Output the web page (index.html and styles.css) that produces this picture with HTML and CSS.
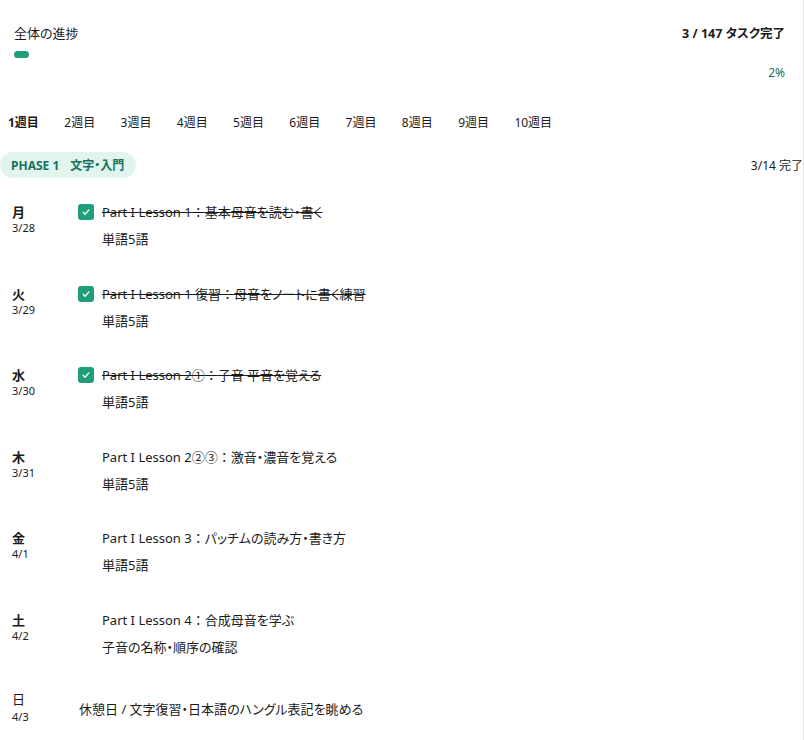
FILE: index.html
```html
<!DOCTYPE html>
<html lang="ja">
<head>
<meta charset="utf-8">
<link rel="stylesheet" href="styles.css">
</head>
<body>
<div class="page">
  <section class="progress">
    <div class="progress-top">
      <div class="progress-title">全体の進捗</div>
      <div class="progress-count">3 / 147 タスク完了</div>
    </div>
    <div class="track"><div class="fill" style="width:2%"></div></div>
    <div class="percent">2%</div>
  </section>

  <nav class="weeks">
    <span class="week active">1週目</span>
    <span class="week">2週目</span>
    <span class="week">3週目</span>
    <span class="week">4週目</span>
    <span class="week">5週目</span>
    <span class="week">6週目</span>
    <span class="week">7週目</span>
    <span class="week">8週目</span>
    <span class="week">9週目</span>
    <span class="week">10週目</span>
  </nav>

  <div class="phase-head">
    <span class="phase-badge">PHASE 1<span class="phase-name">文字・入門</span></span>
    <span class="phase-count">3/14 完了</span>
  </div>

  <div class="days">
    <div class="row">
      <div class="day"><div class="dow">月</div><div class="date">3/28</div></div>
      <div class="tasks">
        <div class="task done"><span class="check"><svg viewBox="0 0 16 16" width="16" height="16"><path d="M5.2 8.3 L7.1 10.2 L10.9 5.9" fill="none" stroke="#fff" stroke-width="1.3" stroke-linecap="round" stroke-linejoin="round"/></svg></span><span class="title">Part I Lesson 1<span class="fw">：</span>基本母音を読む・書く</span></div>
        <div class="sub">単語5語</div>
      </div>
    </div>
    <div class="row">
      <div class="day"><div class="dow">火</div><div class="date">3/29</div></div>
      <div class="tasks">
        <div class="task done"><span class="check"><svg viewBox="0 0 16 16" width="16" height="16"><path d="M5.2 8.3 L7.1 10.2 L10.9 5.9" fill="none" stroke="#fff" stroke-width="1.3" stroke-linecap="round" stroke-linejoin="round"/></svg></span><span class="title">Part I Lesson 1 復習<span class="fw">：</span>母音をノートに書く練習</span></div>
        <div class="sub">単語5語</div>
      </div>
    </div>
    <div class="row">
      <div class="day"><div class="dow">水</div><div class="date">3/30</div></div>
      <div class="tasks">
        <div class="task done"><span class="check"><svg viewBox="0 0 16 16" width="16" height="16"><path d="M5.2 8.3 L7.1 10.2 L10.9 5.9" fill="none" stroke="#fff" stroke-width="1.3" stroke-linecap="round" stroke-linejoin="round"/></svg></span><span class="title">Part I Lesson 2①<span class="fw">：</span>子音 平音を覚える</span></div>
        <div class="sub">単語5語</div>
      </div>
    </div>
    <div class="row">
      <div class="day"><div class="dow">木</div><div class="date">3/31</div></div>
      <div class="tasks">
        <div class="task"><span class="check empty"></span><span class="title">Part I Lesson 2②③<span class="fw">：</span>激音・濃音を覚える</span></div>
        <div class="sub">単語5語</div>
      </div>
    </div>
    <div class="row">
      <div class="day"><div class="dow">金</div><div class="date">4/1</div></div>
      <div class="tasks">
        <div class="task"><span class="check empty"></span><span class="title">Part I Lesson 3<span class="fw">：</span>パッチムの読み方・書き方</span></div>
        <div class="sub">単語5語</div>
      </div>
    </div>
    <div class="row">
      <div class="day"><div class="dow">土</div><div class="date">4/2</div></div>
      <div class="tasks">
        <div class="task"><span class="check empty"></span><span class="title">Part I Lesson 4<span class="fw">：</span>合成母音を学ぶ</span></div>
        <div class="sub">子音の名称・順序の確認</div>
      </div>
    </div>
    <div class="row rest">
      <div class="day"><div class="dow">日</div><div class="date">4/3</div></div>
      <div class="rest-text">休憩日 / 文字復習・日本語のハングル表記を眺める</div>
    </div>
  </div>
</div>
</body>
</html>
```

FILE: styles.css
```css
html, body {
  margin: 0;
  padding: 0;
  background: #fff;
}
body {
  font-family: "Noto Sans", "Noto Sans CJK JP", sans-serif;
  font-feature-settings: "palt";
  color: #1b1b1b;
}
.page {
  width: 803px;
  height: 740px;
  border-right: 1px solid #e6e6e6;
  overflow: hidden;
}
.progress {
  padding: 21px 18px 0 14px;
}
.progress-top {
  display: flex;
  justify-content: space-between;
  align-items: center;
  height: 22px;
}
.progress-title {
  font-size: 13px;
}
.progress-count {
  font-size: 12.5px;
  font-weight: 700;
}
.track {
  margin-top: 8px;
  height: 7px;
  border-radius: 4px;
  background: transparent;
}
.fill {
  height: 7px;
  border-radius: 4px;
  background: #1f9e79;
}
.percent {
  margin-top: 7px;
  text-align: right;
  font-size: 12px;
  color: #17735f;
  line-height: 16px;
}
.weeks {
  display: flex;
  gap: 25.4px;
  padding: 34px 0 0 8px;
  font-size: 12px;
  line-height: 16px;
}
.week.active {
  font-weight: 700;
}
.phase-head {
  display: flex;
  justify-content: space-between;
  align-items: center;
  margin-top: 21px;
  height: 26px;
}
.phase-badge {
  display: inline-flex;
  align-items: center;
  height: 26px;
  padding: 0 12px 0 11px;
  border-radius: 13px;
  background: #e2f4ee;
  color: #17735f;
  font-size: 12px;
  font-weight: 700;
}
.phase-name {
  margin-left: 11px;
}
.phase-count {
  font-size: 12px;
  margin-right: 0;
}
.days {
  display: flex;
  flex-direction: column;
  margin-top: 7px;
}
.row {
  display: flex;
  padding: 17px 0 17.5px 12px;
}
.day {
  width: 66px;
  flex: none;
}
.dow {
  font-size: 13px;
  font-weight: 700;
  line-height: 18px;
  margin-top: 1px;
}
.date {
  font-size: 11px;
  line-height: 14px;
}
.tasks {
  display: flex;
  flex-direction: column;
  gap: 7px;
}
.task {
  display: flex;
  align-items: flex-start;
  gap: 8px;
  font-size: 13px;
  line-height: 20px;
}
.fw {
  font-feature-settings: normal;
}
.check {
  width: 16px;
  height: 16px;
  margin-top: 2px;
  border-radius: 3px;
  background: #1f9e79;
  flex: none;
  display: flex;
}
.check.empty {
  background: transparent;
}
.task.done .title {
  text-decoration: line-through;
}
.sub {
  font-size: 13px;
  line-height: 20px;
  padding-left: 24px;
}
.row.rest {
  align-items: center;
  padding-top: 15px;
}
.row.rest .dow {
  line-height: 20px;
  margin-top: 0;
  font-weight: 400;
}
.row.rest .date {
  line-height: 16px;
}
.rest-text {
  margin-left: 1px;
  margin-top: 3px;
  font-size: 13px;
  line-height: 20px;
}
```
